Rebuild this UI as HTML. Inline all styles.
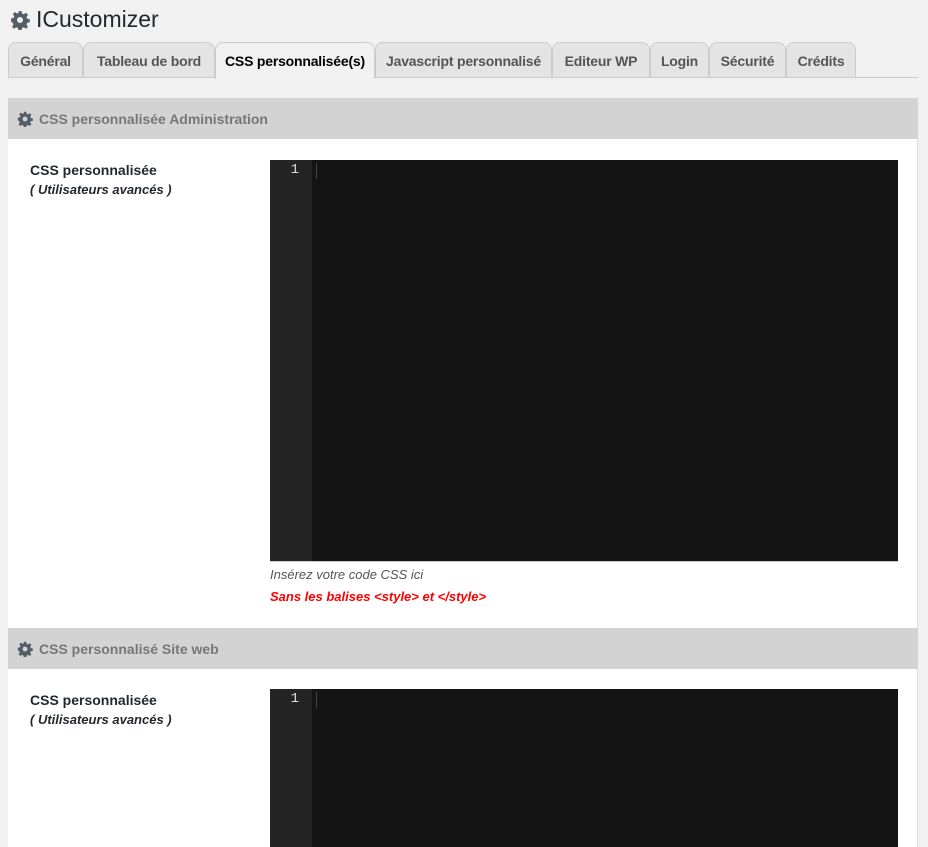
<!DOCTYPE html>
<html style="width:928px;height:847px;overflow:hidden"><head><meta charset="utf-8"><style>
*{margin:0;padding:0;box-sizing:border-box}
body{width:928px;height:847px;background:#f1f1f1;font-family:"Liberation Sans",sans-serif;color:#23282d;position:relative;overflow:hidden}
.abs{position:absolute}
h1{position:absolute;left:10px;top:6px;font-size:23px;font-weight:normal;display:flex;align-items:center;gap:6px}
.tab{position:absolute;top:42px;height:36px;background:#e4e4e4;border:1px solid #ccc;border-bottom:none;border-radius:8px 8px 0 0;font-size:14px;font-weight:bold;color:#555;display:flex;align-items:center;justify-content:center;letter-spacing:-0.2px}
.tab.act{background:#f1f1f1;color:#000;height:37px}
.line{left:8px;top:77px;width:910px;height:1px;background:#ccc}
.panel{left:8px;top:98px;width:910px;height:749px;background:#fff;border-right:1px solid #ddd}
.hd{position:absolute;left:8px;width:910px;height:41px;background:#d3d3d3;font-size:14px;font-weight:bold;color:#777;display:flex;align-items:center;padding-left:9px;gap:6px}
.lbl{position:absolute;left:30px;font-size:14px;font-weight:bold;color:#23282d;line-height:19px}
.lbl i{font-size:13px}
.ed{position:absolute;left:270px;width:628px;background:#141414;border-bottom:1px solid #ccc}
.gut{position:absolute;left:0;top:0;bottom:0;width:42px;background:#242424;color:#ddd;font-family:"Liberation Mono",monospace;font-size:14px;text-align:right;padding:2px 13px 0 0}
.gut:after{content:"";position:absolute;left:46px;top:3px;width:1px;height:16px;background:#444}
</style></head><body>
<h1><svg width="20" height="20" viewBox="0 0 20 20"><path fill="#555d66" d="M8.5 1h3l.5 2.5 1.8.8 2.1-1.5 2.1 2.1-1.5 2.1.8 1.8 2.5.5v3l-2.5.5-.8 1.8 1.5 2.1-2.1 2.1-2.1-1.5-1.8.8-.5 2.5h-3l-.5-2.5-1.8-.8-2.1 1.5-2.1-2.1 1.5-2.1-.8-1.8L1 11.5v-3l2.5-.5.8-1.8-1.5-2.1 2.1-2.1 2.1 1.5 1.8-.8zM10 7a3 3 0 100 6 3 3 0 000-6z"/></svg>ICustomizer</h1>
<div class="tab" style="left:8px;width:75px">Général</div>
<div class="tab" style="left:83px;width:132px">Tableau de bord</div>
<div class="tab" style="left:375px;width:177px">Javascript personnalisé</div>
<div class="tab" style="left:552px;width:98px">Editeur WP</div>
<div class="tab" style="left:650px;width:59px">Login</div>
<div class="tab" style="left:709px;width:77px">Sécurité</div>
<div class="tab" style="left:786px;width:70px">Crédits</div>
<div class="abs line"></div>
<div class="tab act" style="left:215px;width:160px">CSS personnalisée(s)</div>
<div class="abs panel"></div>
<div class="hd" style="top:98px"><svg width="16" height="16" viewBox="0 0 20 20"><path fill="#555d66" d="M8.5 1h3l.5 2.5 1.8.8 2.1-1.5 2.1 2.1-1.5 2.1.8 1.8 2.5.5v3l-2.5.5-.8 1.8 1.5 2.1-2.1 2.1-2.1-1.5-1.8.8-.5 2.5h-3l-.5-2.5-1.8-.8-2.1 1.5-2.1-2.1 1.5-2.1-.8-1.8L1 11.5v-3l2.5-.5.8-1.8-1.5-2.1 2.1-2.1 2.1 1.5 1.8-.8zM10 7a3 3 0 100 6 3 3 0 000-6z"/></svg>CSS personnalisée Administration</div>
<div class="lbl" style="top:161px">CSS personnalisée<br><i>( Utilisateurs avancés )</i></div>
<div class="ed" style="top:160px;height:402px"><div class="gut">1</div></div>
<div class="abs" style="left:270px;top:567px;font-size:13px;font-style:italic;color:#555">Insérez votre code CSS ici</div>
<div class="abs" style="left:270px;top:589px;font-size:13px;font-style:italic;font-weight:bold;color:#f00">Sans les balises &lt;style&gt; et &lt;/style&gt;</div>
<div class="hd" style="top:628px"><svg width="16" height="16" viewBox="0 0 20 20"><path fill="#555d66" d="M8.5 1h3l.5 2.5 1.8.8 2.1-1.5 2.1 2.1-1.5 2.1.8 1.8 2.5.5v3l-2.5.5-.8 1.8 1.5 2.1-2.1 2.1-2.1-1.5-1.8.8-.5 2.5h-3l-.5-2.5-1.8-.8-2.1 1.5-2.1-2.1 1.5-2.1-.8-1.8L1 11.5v-3l2.5-.5.8-1.8-1.5-2.1 2.1-2.1 2.1 1.5 1.8-.8zM10 7a3 3 0 100 6 3 3 0 000-6z"/></svg>CSS personnalisé Site web</div>
<div class="lbl" style="top:691px">CSS personnalisée<br><i>( Utilisateurs avancés )</i></div>
<div class="ed" style="top:689px;height:158px;border-bottom:none"><div class="gut">1</div></div>
</body></html>
